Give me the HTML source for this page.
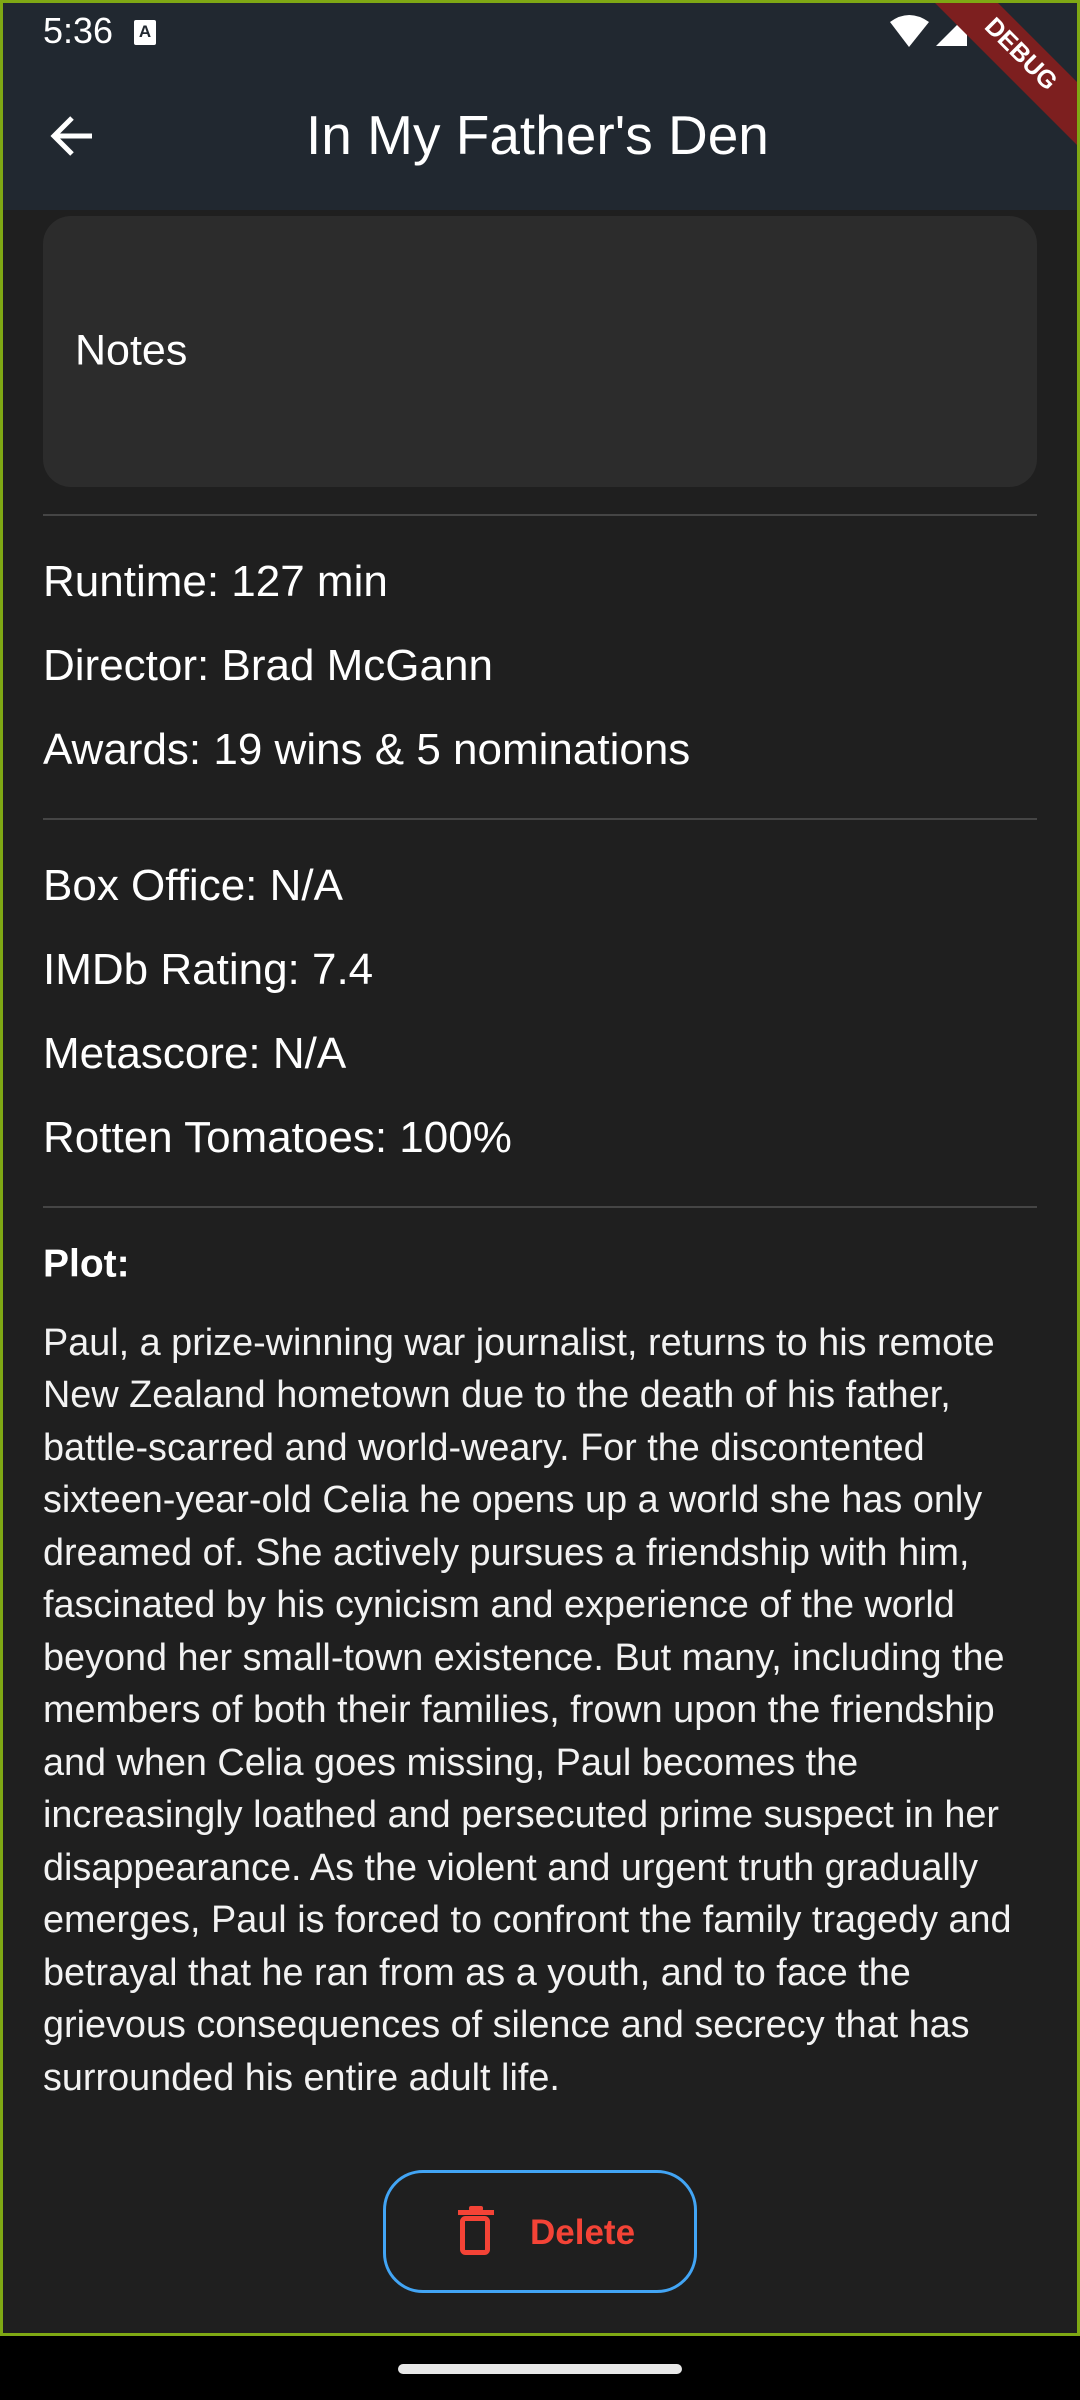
<!DOCTYPE html>
<html><head><meta charset="utf-8"><style>
*{margin:0;padding:0;box-sizing:border-box}
body{width:1080px;height:2400px;background:#000;font-family:"Liberation Sans",sans-serif;color:#fff;position:relative;overflow:hidden}
#scr{position:absolute;left:0;top:0;width:1080px;height:2336px;background:#1f1f1f;border:3px solid #7fa814}
#bar{position:absolute;left:0;top:0;width:1074px;height:207px;background:#212830}
.t{position:absolute;white-space:nowrap;line-height:1}
.row{position:absolute;left:43px;font-size:44px;white-space:nowrap;line-height:1;transform:translateY(-50%)}
.div{position:absolute;left:43px;width:994px;height:2px;background:#454545}
.pl{position:absolute;left:43px;font-size:37.8px;white-space:nowrap;line-height:1;transform:translateY(-50%);color:#f2f2f2}
</style></head><body>
<div id="scr">
<div id="bar"></div>
</div>
<div class="t" style="left:43px;top:13px;font-size:36px">5:36</div>
<div style="position:absolute;left:134px;top:20px;width:22px;height:25px;background:#fff;border-radius:2px;color:#212830;font-size:17px;font-weight:bold;text-align:center;line-height:23px">A</div>
<svg style="position:absolute;left:0;top:0" width="1080" height="210">
<path d="M890 22 Q909 8 929 22 L909 47 Z" fill="#fff"/>
<path d="M936 46 L967 46 L967 15 Z" fill="#fff"/>
<rect x="985" y="15" width="20" height="30" rx="2" fill="#fff"/>
<rect x="990" y="11" width="10" height="5" fill="#fff"/>
<polygon points="935,3 998,3 1077,82 1077,145" fill="#7d1f1f"/>
<text x="0" y="0" transform="translate(1020,55) rotate(45)" font-family="Liberation Sans" font-weight="bold" font-size="25" fill="#fff" text-anchor="middle" dominant-baseline="middle">DEBUG</text>
<path d="M54 136 L92 136 M72 118 L54 136 L72 154" stroke="#fff" stroke-width="5" fill="none"/>
</svg>
<div class="t" style="left:306px;top:108px;font-size:55px">In My Father's Den</div>

<div style="position:absolute;left:43px;top:216px;width:994px;height:271px;background:#2c2c2c;border-radius:28px"></div>
<div class="row" style="left:75px;top:351px;font-size:43px">Notes</div>
<div class="div" style="top:514px"></div>
<div class="row" style="top:582px">Runtime: 127 min</div>
<div class="row" style="top:666px">Director: Brad McGann</div>
<div class="row" style="top:750px">Awards: 19 wins &amp; 5 nominations</div>
<div class="div" style="top:818px"></div>
<div class="row" style="top:886px">Box Office: N/A</div>
<div class="row" style="top:970px">IMDb Rating: 7.4</div>
<div class="row" style="top:1054px">Metascore: N/A</div>
<div class="row" style="top:1138px">Rotten Tomatoes: 100%</div>
<div class="div" style="top:1206px"></div>
<div class="row" style="top:1264px;font-weight:bold;font-size:39px">Plot:</div>
<div class="pl" style="top:1344px">Paul, a prize-winning war journalist, returns to his remote</div>
<div class="pl" style="top:1396px">New Zealand hometown due to the death of his father,</div>
<div class="pl" style="top:1449px">battle-scarred and world-weary. For the discontented</div>
<div class="pl" style="top:1501px">sixteen-year-old Celia he opens up a world she has only</div>
<div class="pl" style="top:1554px">dreamed of. She actively pursues a friendship with him,</div>
<div class="pl" style="top:1606px">fascinated by his cynicism and experience of the world</div>
<div class="pl" style="top:1659px">beyond her small-town existence. But many, including the</div>
<div class="pl" style="top:1711px">members of both their families, frown upon the friendship</div>
<div class="pl" style="top:1764px">and when Celia goes missing, Paul becomes the</div>
<div class="pl" style="top:1816px">increasingly loathed and persecuted prime suspect in her</div>
<div class="pl" style="top:1869px">disappearance. As the violent and urgent truth gradually</div>
<div class="pl" style="top:1921px">emerges, Paul is forced to confront the family tragedy and</div>
<div class="pl" style="top:1974px">betrayal that he ran from as a youth, and to face the</div>
<div class="pl" style="top:2026px">grievous consequences of silence and secrecy that has</div>
<div class="pl" style="top:2079px">surrounded his entire adult life.</div>

<div style="position:absolute;left:383px;top:2170px;width:314px;height:123px;border:3px solid #42a5f5;border-radius:40px"></div>
<svg style="position:absolute;left:456px;top:2206px" width="40" height="52" viewBox="0 0 40 52">
<rect x="2" y="4" width="36" height="5" fill="#f44336"/>
<rect x="13" y="0" width="14" height="5" rx="2" fill="#f44336"/>
<rect x="6.5" y="12.5" width="25" height="34" rx="3" fill="none" stroke="#f44336" stroke-width="5"/>
</svg>
<div class="t" style="left:530px;top:2215px;font-size:35px;font-weight:bold;color:#f44336">Delete</div>

<div style="position:absolute;left:398px;top:2364px;width:284px;height:10px;border-radius:5px;background:#e8e8e8"></div>
</body></html>
